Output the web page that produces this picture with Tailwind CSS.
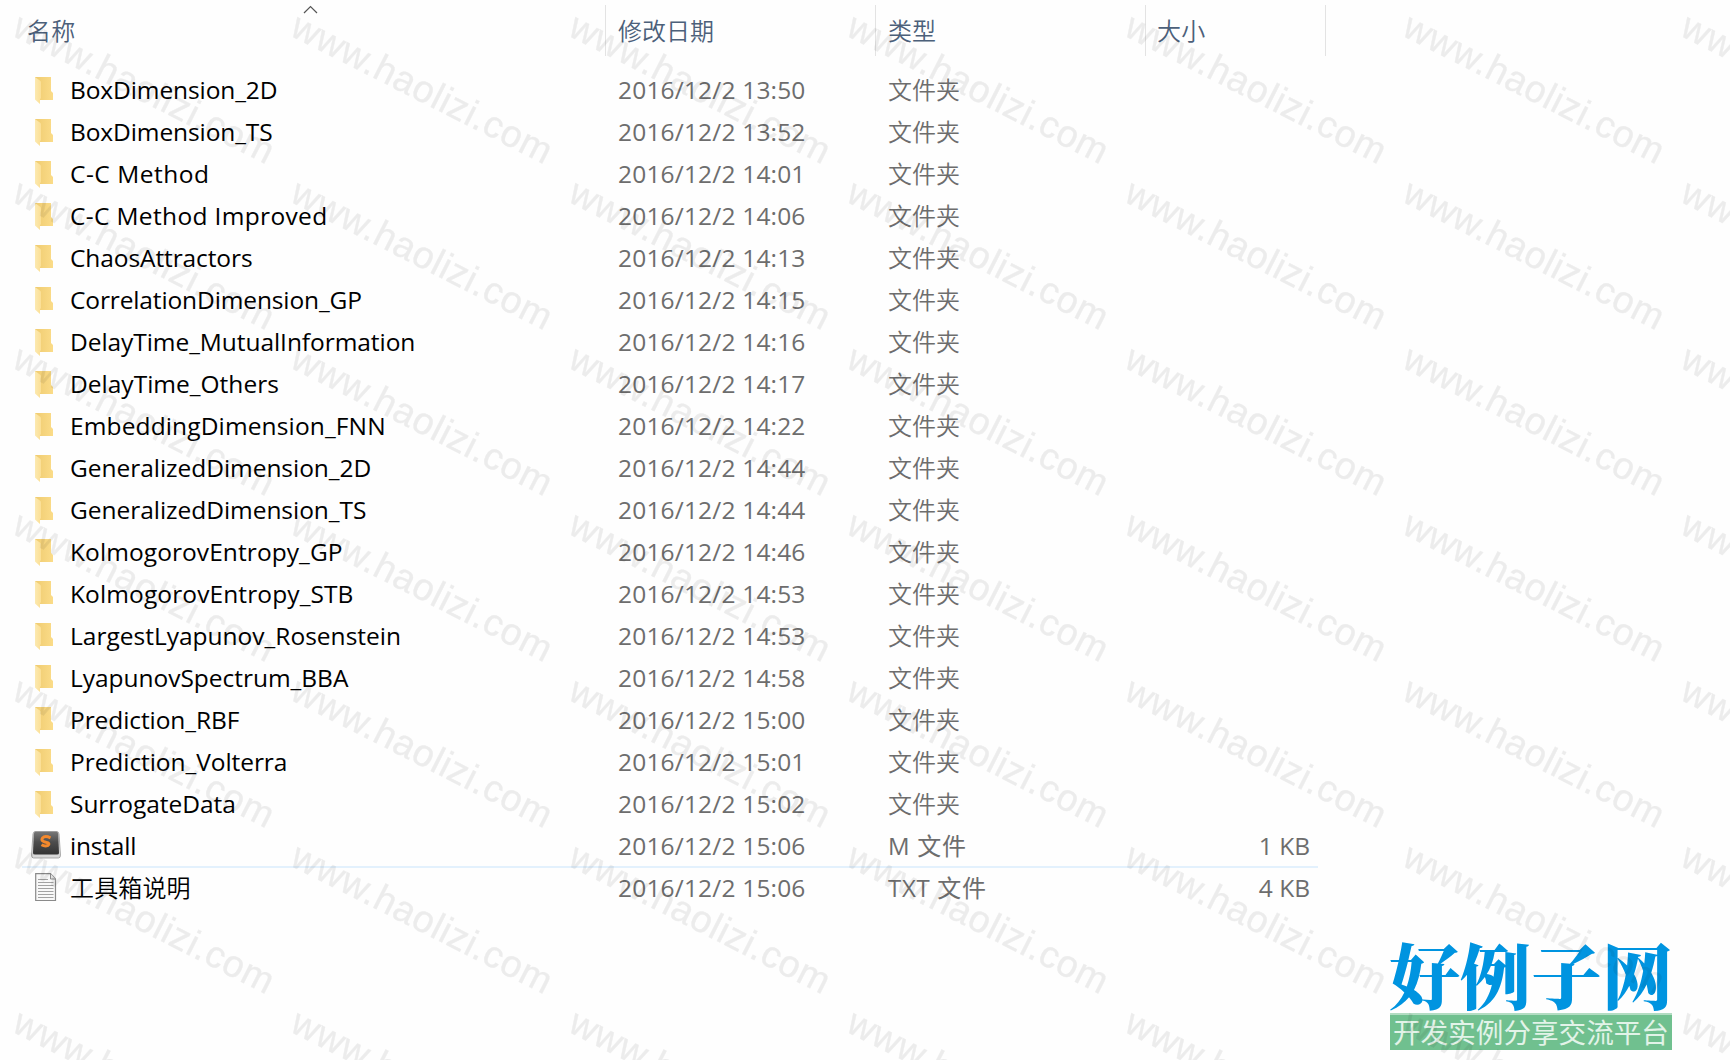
<!DOCTYPE html>
<html lang="zh-CN">
    <head>
        <meta charset="UTF-8">
        <meta name="viewport" content="width=device-width, initial-scale=1.0">
        <title>文件夹</title>
        <script src="https://cdn.jsdelivr.net/npm/@tailwindcss/browser@4"></script>
    </head>
    <body class="bg-[#fefefe]">
        <div class="relative w-[1730px] h-[1060px] overflow-hidden bg-[#fefefe] text-[24px] leading-[42px] font-['Open_Sans','Noto_Sans_CJK_SC',sans-serif]">
            <!-- column headers -->
            <div class="relative flex w-[1326px] h-[69px] pt-[5px] text-[#4c607a] leading-[52px] font-[350]">
                <svg class="absolute left-[303px] top-[5px]" width="15" height="9" viewBox="0 0 15 9"><path d="M1 8 L7.5 1.5 L14 8" fill="none" stroke="#555" stroke-width="1.2"/></svg>
                <div class="w-[606px] h-[51px] pl-[27px] border-r border-[#e3e3e3] tracking-[0.3px]">名称</div>
                <div class="w-[270px] h-[51px] pl-[12px] border-r border-[#e3e3e3]">修改日期</div>
                <div class="w-[270px] h-[51px] pl-[12px] border-r border-[#e3e3e3]">类型</div>
                <div class="w-[180px] h-[51px] pl-[11px] border-r border-[#e3e3e3] tracking-[0.3px]">大小</div>
            </div>
            <div id="files" class="w-[1318px]"></div>

            <!-- site logo -->
            <div class="absolute left-[1388px] top-[936px] w-[286px] text-center whitespace-nowrap">
                <p class="h-[77px] leading-[73px] text-[71px] font-black text-[#0094e0] font-['Noto_Serif_CJK_SC','Noto_Sans_CJK_SC',serif]">好例子网</p>
                <p class="mx-[2px] h-[37px] border-t-2 border-[#b2dcc2] bg-[#70c08f] leading-[33px] text-[27.6px] text-[#e2f3e8] font-['Noto_Sans_CJK_SC',sans-serif]">开发实例分享交流平台</p>
            </div>

            <!-- watermark -->
            <svg class="absolute inset-0 pointer-events-none" width="1730" height="1060">
                <defs>
                    <pattern id="mark" width="278" height="166" patternUnits="userSpaceOnUse">
                        <text transform="translate(10.5 34.7) rotate(26.9)" textLength="287" font-family="Liberation Sans, sans-serif" font-size="37.5" stroke="#000" stroke-width="0.4" opacity="0.07">www.haolizi.com</text>
                    </pattern>
                </defs>
                <rect width="1730" height="1060" fill="url(#mark)"/>
            </svg>
        </div>

        <template id="folder">
            <svg width="20" height="28" viewBox="0 0 20 28">
                <defs>
                    <linearGradient id="fb" x1="0" x2="1"><stop offset="0" stop-color="#efcb70"/><stop offset="1" stop-color="#fbdc89"/></linearGradient>
                    <linearGradient id="ff" x1="0" x2="1"><stop offset="0" stop-color="#fce9b0"/><stop offset="1" stop-color="#fbdf95"/></linearGradient>
                </defs>
                <path d="M0 0 H16 V14 L18 16 V23 H5 L0 4 Z" fill="url(#fb)"/>
                <path d="M0 0 L5.5 4 Q6 4.500 6 5.500 V21 L5 22.500 V27 L0 22.500 Z" fill="url(#ff)"/>
            </svg>
        </template>
        <template id="sublime">
            <svg width="30" height="28" viewBox="0 0 30 28">
                <defs><linearGradient id="key" x1="0" x2="0" y1="0" y2="1"><stop offset="0" stop-color="#777"/><stop offset="0.45" stop-color="#4d4d4d"/><stop offset="1" stop-color="#333"/></linearGradient></defs>
                <path d="M4 .5 H26 Q27.500 .5 28 3 L29.500 24 Q29.500 27 27.500 27 H2.500 Q.5 27 .5 24 L2 3 Q2.500 .5 4 .5 Z" fill="#d8d8d8" stroke="#999" stroke-width=".8"/>
                <path d="M4.500 .8 H25.500 Q27 .8 27.200 3 L28 22 Q28 23.500 26 23.500 H4 Q2 23.500 2 22 L2.800 3 Q3 .8 4.500 .8 Z" fill="url(#key)"/>
                <path d="M19.500 6.800 Q14 4.300 11.500 7 Q9.800 9.500 13 10.700 L17 11.800 Q18.800 13 17 14.400 Q14 15.800 10.500 13.800" fill="none" stroke="#f5892c" stroke-width="3"/>
            </svg>
        </template>
        <template id="txt">
            <svg width="22" height="29" viewBox="0 0 22 29">
                <path d="M.7 .7 H15.500 L20.500 6 V27.500 H.7 Z" fill="#f8f8f8" stroke="#8a8a8a" stroke-width="1.200"/>
                <path d="M15.500 .7 V6 H20.500" fill="#e2e2e2" stroke="#8a8a8a"/>
                <path d="M3 6.500 H13 M3 9.500 H18.500 M3 12.500 H18.500 M3 15.500 H18.500 M3 18.500 H18.500 M3 21.500 H18.500 M3 24.500 H18.500" stroke="#a2a2a2"/>
            </svg>
        </template>
    </body>
    <script>
        // name, letter spacing of the name, time, type, size, icon
        let files = [
            ["BoxDimension_2D", -0.1, "13:50"],
            ["BoxDimension_TS", -0.1, "13:52"],
            ["C-C Method", 0.52, "14:01"],
            ["C-C Method Improved", 0.34, "14:06"],
            ["ChaosAttractors", -0.1, "14:13"],
            ["CorrelationDimension_GP", -0.13, "14:15"],
            ["DelayTime_MutualInformation", -0.06, "14:16"],
            ["DelayTime_Others", 0.01, "14:17"],
            ["EmbeddingDimension_FNN", 0.13, "14:22"],
            ["GeneralizedDimension_2D", -0.04, "14:44"],
            ["GeneralizedDimension_TS", -0.04, "14:44"],
            ["KolmogorovEntropy_GP", 0.08, "14:46"],
            ["KolmogorovEntropy_STB", 0.11, "14:53"],
            ["LargestLyapunov_Rosenstein", 0, "14:53"],
            ["LyapunovSpectrum_BBA", -0.03, "14:58"],
            ["Prediction_RBF", -0.08, "15:00"],
            ["Prediction_Volterra", -0.06, "15:01"],
            ["SurrogateData", -0.05, "15:02"],
            ["install", -0.2, "15:06", "M 文件", "1 KB", "sublime"],
            ["工具箱说明", 0.15, "15:06", "TXT 文件", "4 KB", "txt"]
        ]
        let iconClass = {
            folder: "w-[70px] pl-[35px] pt-[8px]",
            sublime: "w-[70px] pl-[31px] pt-[6px]",
            txt: "w-[70px] pl-[35px] pt-[6px]"
        }
        let list = document.getElementById("files")
        for(let i = 0; i < files.length; i++){
            let [name, spacing, time, type = "文件夹", size = "", icon = "folder"] = files[i]
            let row = document.createElement("div")
            row.setAttribute("class", "relative flex h-[42px] whitespace-nowrap text-[#6d6d6d]")
            row.innerHTML = `
                <div class="${iconClass[icon]}">${document.getElementById(icon).innerHTML}</div>
                <div class="w-[548px] text-black ${icon === "txt" ? "text-[24px] font-[350]" : "text-[24.5px]"}" style="letter-spacing: ${spacing}px">${name}</div>
                <div class="w-[270px] text-[24.5px] tracking-[0.18px]">2016/12/2 ${time}</div>
                <div class="w-[270px] ${icon === "folder" ? "font-[350]" : "tracking-[0.7px]"}">${type}</div>
                <div class="w-[152px] text-right text-[24.5px]">${size}</div>`
            if(icon === "sublime"){
                row.innerHTML += `<div class="absolute left-[22px] right-0 -bottom-px h-[2px] bg-[#e3f1fd]"></div>`
            }
            list.appendChild(row)
        }
    </script>
</html>
